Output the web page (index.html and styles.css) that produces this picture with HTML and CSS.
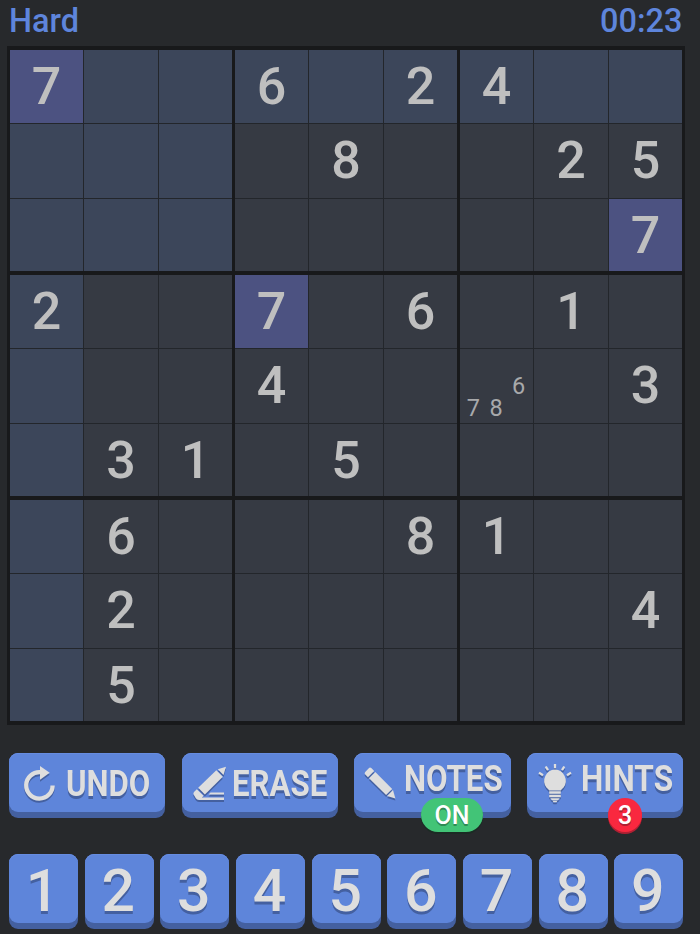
FILE: index.html
```html
<!DOCTYPE html>
<html lang="en">
<head>
    <meta charset="UTF-8">
    <meta name="viewport" content="width=device-width, initial-scale=1.0">
    <title>Sudoku</title>
    <link rel="stylesheet" href="styles.css">
</head>
<body>
    <div class="game">
        <header class="top-bar">
            <span>Hard</span>
            <span class="timer">00:23</span>
        </header>

        <div class="board" id="board"></div>

        <div class="actions">
            <button class="btn action undo">
                <svg class="icon" width="32" height="36" viewBox="0 0 32 36">
                    <path d="M28.6 19.4A13.2 13.2 0 1 1 16.2 6.2" fill="none" stroke="#dedede" stroke-width="4.3"/>
                    <path d="M16 0L25.7 6.8L16 13.8z"/>
                </svg>
                <span class="label">UNDO</span>
            </button>
            <button class="btn action erase">
                <svg class="icon" width="34" height="36" viewBox="0 0 34 36">
                    <path d="M33 .7L24.8 3.2L30.5 9z"/>
                    <path d="M23.3 4.2L29.8 10.8L11.9 28.4L5.2 21.8z"/>
                    <path d="M3.8 23.2L10.6 29.8L9 31.5H31V34H6Q3.8 34 2.8 32.3L.6 28.6Q0 27.3 1 26z"/>
                    <path d="M17.5 26.6H31V28.6H15.5z"/>
                </svg>
                <span class="label">ERASE</span>
            </button>
            <button class="btn action notes">
                <svg class="icon" width="34" height="36" viewBox="0 0 34 36">
                    <path d="M1.2 5L4.8 1.2Q6 0 7.3 1.1L10.2 4L4 10.2L1.2 7.6Q0 6.2 1.2 5z"/>
                    <path d="M11.3 5L28.2 22L22.1 28.1L5 11.3z"/>
                    <path d="M29 23L31.4 31.6L23 29z"/>
                </svg>
                <span class="label">NOTES</span>
                <span class="badge on">ON</span>
            </button>
            <button class="btn action hints">
                <svg class="icon" width="34" height="40" viewBox="0 0 34 40">
                    <path d="M17 5.6A11.2 11.2 0 0 1 25.6 23.4Q23.2 25.2 22.9 26.4H11.1Q10.8 25.2 8.4 23.4A11.2 11.2 0 0 1 17 5.6z"/>
                    <path d="M11.2 27.2H22.8V29.8H11.2zM11.2 30.7H22.8V33.3H11.2zM12.2 34.2H21.8L20 36.2H14zM14.6 36.8H19.4L18.5 38.2H15.5z"/>
                    <path d="M17 0V4.3M7.7 2.5L10 6.2M26.3 2.5L24 6.2M1 8.6L5 11.2M33 8.6L29 11.2" stroke="#dedede" stroke-width="2.3"/>
                </svg>
                <span class="label">HINTS</span>
                <span class="badge count">3</span>
            </button>
        </div>

        <div class="keypad">
            <button class="btn key">1</button>
            <button class="btn key">2</button>
            <button class="btn key">3</button>
            <button class="btn key">4</button>
            <button class="btn key">5</button>
            <button class="btn key">6</button>
            <button class="btn key">7</button>
            <button class="btn key">8</button>
            <button class="btn key">9</button>
        </div>
    </div>

    <script>
        const puzzle = [
            "7..6.24..",
            "....8..25",
            "........7",
            "2..7.6.1.",
            "...4....3",
            ".31.5....",
            ".6...81..",
            ".2......4",
            ".5......."
        ];
        const notes = { "4,6": [6, 7, 8] };
        const selected = { row: 0, col: 0 };

        const board = document.getElementById("board");
        const current = puzzle[selected.row][selected.col];

        for (let b = 0; b < 9; b++) {
            const box = document.createElement("div");
            box.className = "box";
            const top = Math.floor(b / 3) * 3;
            const left = (b % 3) * 3;

            for (let i = 0; i < 9; i++) {
                const row = top + Math.floor(i / 3);
                const col = left + (i % 3);
                const value = puzzle[row][col];
                const cell = document.createElement("div");
                cell.className = "cell";

                // same row, column or box as the selected cell
                if (row === selected.row || col === selected.col || b === 0) {
                    cell.classList.add("peer");
                }
                if (value === current) {
                    cell.classList.add("same");
                }

                const marks = notes[row + "," + col];
                if (marks) {
                    cell.classList.add("pencil");
                    for (let n = 1; n <= 9; n++) {
                        const mark = document.createElement("span");
                        mark.textContent = marks.includes(n) ? n : "";
                        cell.appendChild(mark);
                    }
                } else if (value !== ".") {
                    cell.textContent = value;
                }
                box.appendChild(cell);
            }
            board.appendChild(box);
        }
    </script>
</body>
</html>
```

FILE: styles.css
```css
* {
    box-sizing: border-box;
}

body {
    margin: 0;
    background: #27292c;
    font-family: Roboto, sans-serif;
    overflow: hidden;
}

.game {
    width: 700px;
    height: 934px;
    padding: 0 16.6px 0 7px;
}

.top-bar {
    display: flex;
    justify-content: space-between;
    height: 46px;
    padding: 0 1px 0 2px;
    line-height: 43px;
    font-size: 32.5px;
    font-weight: 500;
    color: #5e85dc;
}

/* Board */
.board {
    display: grid;
    grid-template-columns: repeat(3, 222px);
    grid-template-rows: repeat(3, 221px);
    gap: 4px 3px;
    width: 678px;
    padding: 4px 3px;
    background: #18191b;
}

.box {
    display: grid;
    grid-template-columns: 73px 74px 73px;
    grid-template-rows: 73px 74px 72px;
    gap: 1px;
    background: #23262b;
}

.cell {
    background: #363a43;
    color: #bfbfbf;
    font-size: 52px;
    font-weight: 500;
    line-height: 73px;
    text-align: center;
}

.cell.peer {
    background: #3c465a;
}

.cell.same {
    background: #4c5281;
}

.cell.pencil {
    display: grid;
    grid-template-columns: repeat(3, 22.7px);
    grid-template-rows: repeat(3, 22.7px);
    padding: 2px 0 0 2px;
    color: #a8a9ab;
    font-size: 23.5px;
    font-weight: 400;
    line-height: 24px;
}

/* Buttons */
.btn {
    position: relative;
    border: none;
    padding: 0;
    border-radius: 9px;
    background: #4460a0;
    color: #dedede;
    font-family: inherit;
    overflow: visible;
    z-index: 0;
}

/* raised face of the button */
.btn::before {
    content: "";
    position: absolute;
    inset: 0 0 6.5px;
    border-radius: 9px;
    background: #5e85da;
    box-shadow: inset 0 1px #668ce0;
    z-index: -1;
}

.actions {
    display: grid;
    grid-template-columns: repeat(4, minmax(0, 1fr));
    gap: 16.4px;
    margin-top: 28px;
    padding: 0 0 0 2px;
}

.action {
    display: flex;
    align-items: flex-start;
    height: 65px;
}

.icon {
    flex: none;
    fill: #dedede;
    filter: drop-shadow(0 2px 0 #4460a0);
    overflow: visible;
}

.label {
    font-size: 36.5px;
    font-weight: 700;
    line-height: 42px;
    white-space: nowrap;
    transform: scaleX(0.855);
    transform-origin: left;
    text-shadow: 0 3px #4460a0;
}

.undo .icon {
    margin: 13px 0 0 15px;
}

.undo .label {
    margin: 10px 0 0 10px;
}

.erase .icon {
    margin: 13px 0 0 11px;
}

.erase .label {
    margin: 10px 0 0 5.5px;
}

.notes .icon {
    margin: 14px 0 0 10px;
}

.notes .label {
    margin: 5px 0 0 6px;
}

.hints .icon {
    margin: 11px 0 0 11px;
}

.hints .label {
    margin: 5px 0 0 8.8px;
    transform: scaleX(0.865);
}

.badge {
    position: absolute;
    top: 45px;
    height: 34px;
    border-radius: 17px;
    color: #fff;
    font-size: 25px;
    font-weight: 500;
    line-height: 35px;
    text-align: center;
}

.badge.on {
    left: 66.5px;
    width: 62px;
    background: #42c477;
    box-shadow: 0 2px #1b2b24;
    text-shadow: 0 2px #2f8a54;
}

.badge.count {
    left: 81px;
    width: 34px;
    background: #f9283f;
    box-shadow: 0 2px #b02033;
    text-shadow: 0 2px #b02033;
}

/* Number keys */
.keypad {
    display: grid;
    grid-template-columns: repeat(9, minmax(0, 1fr));
    gap: 6.6px;
    margin-top: 36px;
    padding-left: 2px;
}

.key {
    height: 75px;
    padding-right: 2px;
    padding-bottom: 2px;
    font-size: 59px;
    font-weight: 500;
    line-height: 73px;
    text-shadow: 0 3px #4460a0;
}
```
